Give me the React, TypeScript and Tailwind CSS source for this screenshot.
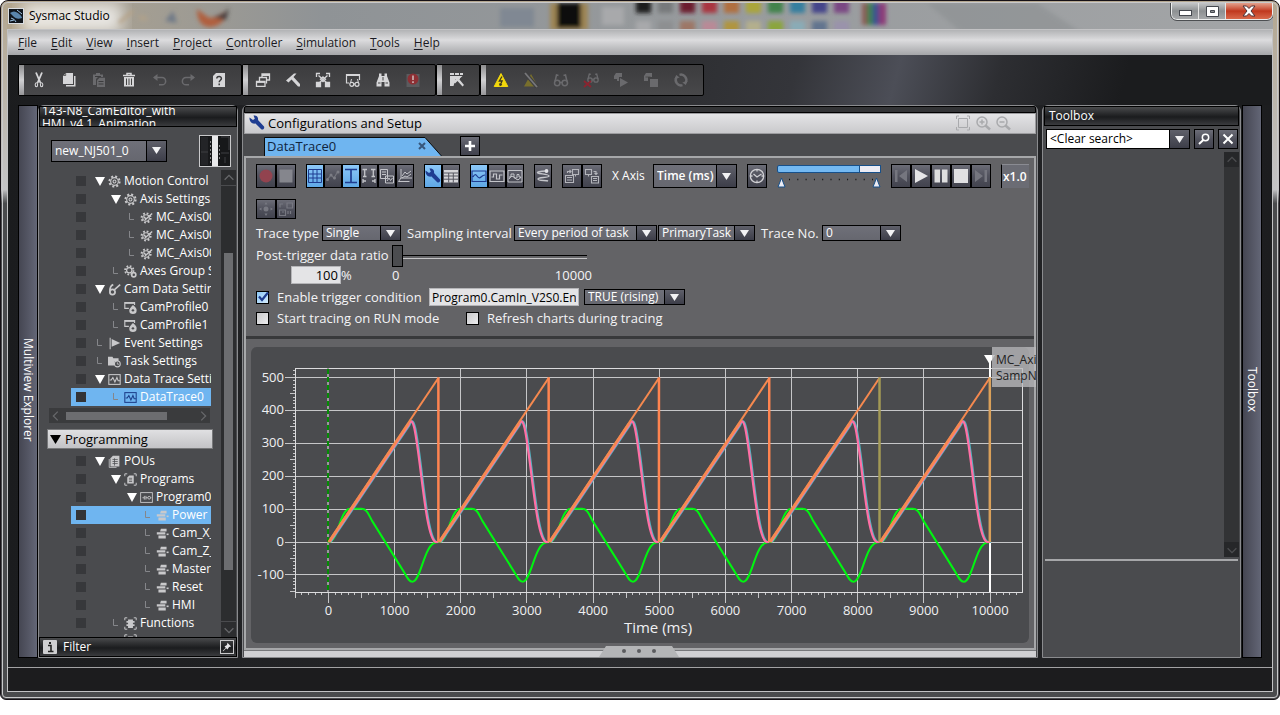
import React from "react";

type IconName = keyof typeof ICONS;

const ICONS = {
  cut: (
    <g fill="none" stroke="currentColor">
      <path d="M5 .5 L9.500 11 M11 .5 L6.500 11" strokeWidth="1.800" />
      <ellipse cx="5.400" cy="12.800" rx="1.200" ry="2" strokeWidth="1.100" />
      <ellipse cx="10.600" cy="12.800" rx="1.200" ry="2" strokeWidth="1.100" />
    </g>
  ),
  copy: (
    <g fill="currentColor">
      <path d="M5 1h7v11H2V4z" />
      <path d="M13 4h1.500v10.500H5V13h8z" />
      <path d="M2.500 3.500h2.200V1.300" fill="none" stroke="#444" strokeWidth=".8" />
    </g>
  ),
  paste: (
    <g fill="currentColor">
      <path d="M2 2.500h3V1h4v1.500h3V5H7L5 7v6H2z" />
      <path d="M8.500 5.800h5.500V15H6V8.300z" />
      <path d="M4 4.500h6M7.500 9.500h5M7.500 12h5" stroke="#3c3c3e" strokeWidth="1" />
    </g>
  ),
  trash: (
    <g fill="none" stroke="currentColor">
      <path d="M2 3.500h12M6 3V1.500h4V3" strokeWidth="1.500" />
      <path d="M3 5h10v9.500H3z" fill="currentColor" stroke="none" />
      <path d="M5.500 6.500v6.500M8 6.500v6.500M10.500 6.500v6.500" stroke="#444" strokeWidth="1" />
    </g>
  ),
  undo: (
    <g fill="none" stroke="currentColor" strokeWidth="1.500">
      <path d="M3 5.500h8a3.600 3.600 0 0 1 0 7.300H8" />
      <path d="M6.500 2L2 5.500l4.500 3.500z" fill="currentColor" stroke="none" />
    </g>
  ),
  redo: (
    <g fill="none" stroke="currentColor" strokeWidth="1.500">
      <path d="M13 5.500H5a3.600 3.600 0 0 0 0 7.300H8" />
      <path d="M9.500 2L14 5.500l-4.500 3.500z" fill="currentColor" stroke="none" />
    </g>
  ),
  help: (
    <g>
      <path d="M5 1h9v14H2V4z" fill="currentColor" />
      <path d="M5.800 6.500C5.800 3.600 10.500 3.800 10.400 6.600C10.400 8.300 8.200 8.300 8.200 10.300M8.200 11.500v1.700" fill="none" stroke="#3a3a3c" strokeWidth="1.500" />
    </g>
  ),
  windows: (
    <g fill="none" stroke="currentColor" strokeWidth="1.300">
      <path d="M7 6V1.800h7.500V8H11" />
      <path d="M7 3h7.500" strokeWidth="2" />
      <path d="M4.500 9V5.500H11.500v6" />
      <path d="M1.500 9.500h8.500v4.800H1.500z" />
      <path d="M1.500 10h8.500" strokeWidth="1.800" />
    </g>
  ),
  hammer: (
    <g fill="currentColor">
      <path d="M1 8.500L9 1.500h2.500L8.500 5l6.500 7v2.500h-2L6.500 7.500 3.500 10.500z" />
    </g>
  ),
  network: (
    <g fill="none" stroke="currentColor" strokeWidth="1.300">
      <path d="M3.500 3.500l9 8M12.500 3.500l-9 8" />
      <path d="M1.500 5V1.500H5M11 1.500h3.500V5" />
      <path d="M8 5l2.500 2.300L8 9.600 5.500 7.300z" />
      <path d="M1.500 10.500h4v4h-4zM10.500 10.500h4v4h-4z" fill="currentColor" />
    </g>
  ),
  watch: (
    <g fill="none" stroke="currentColor">
      <path d="M4 11H1.500V2.500h13V8" strokeWidth="1.200" />
      <path d="M1.500 3h13" strokeWidth="2" />
      <circle cx="6.800" cy="12.300" r="2" strokeWidth="1.200" />
      <circle cx="12" cy="12.300" r="2" strokeWidth="1.200" />
      <path d="M5.500 11l1-4M13.500 11l-1-4M8.800 12h1.200" />
    </g>
  ),
  binoculars: (
    <g fill="currentColor">
      <path d="M4 1.500h2.500V4H9.500V1.500H12V4l2.500 6.500v4H9.500V10h-3v4.500h-5v-4L4 4z" />
      <path d="M3 11h2.500M10.500 11H13M8 5v3.500" stroke="#444" strokeWidth="1" />
    </g>
  ),
  alert: (
    <g>
      <path d="M1.500 2h13v13h-13z" fill="#5b5b5e" />
      <circle cx="8" cy="7" r="5.500" fill="#8d2f34" />
      <path d="M8 3.500v4.500M8 9.200v1.700" stroke="#c4a8a8" strokeWidth="1.800" />
    </g>
  ),
  toolWindow: (
    <g fill="currentColor">
      <path d="M1 1h4v2H1zM6 1h4v2H6zM11 1h3v2h-3zM1 4h12.500l-5 4.500L6.500 7l-2 7H1z" />
      <path d="M4 10l5-5h2.500l-1 2.500L15 13l-1.500 1.500L8.500 9 6 11.500z" />
    </g>
  ),
  online: (
    <g>
      <path d="M8 1.500l6.800 13H1.200z" fill="#f2d70c" stroke="#f2d70c" strokeLinejoin="round" />
      <path d="M9 4.500L6.300 9h2.800L7.300 13M6.500 11.500l.7 1.800 1.800-.8" fill="none" stroke="#3b3620" strokeWidth="1.300" />
    </g>
  ),
  offline: (
    <g>
      <path d="M8 2l7 12.500H1z" fill="#786f2c" />
      <path d="M2 1l12 14" stroke="#3f3f41" strokeWidth="4" />
      <path d="M2 1l12 14" stroke="#77777a" strokeWidth="1.800" />
    </g>
  ),
  glasses: (
    <g fill="none" stroke="currentColor" strokeWidth="1.500">
      <circle cx="4.200" cy="11" r="2.700" />
      <circle cx="11.800" cy="11" r="2.700" />
      <path d="M2 9.500L3.500 3l2 .5M14 9.500L12.500 3l-2 .5M7 10.500h2" />
    </g>
  ),
  glassesOff: (
    <g fill="none" stroke="currentColor" strokeWidth="1.300">
      <circle cx="7" cy="8" r="2.200" />
      <circle cx="13" cy="8" r="2.200" />
      <path d="M5 7l1.300-5 1.500.4M15 7l-1.300-5-1.500.4M9.300 7.500h1.400" />
      <path d="M1 9l7 6M8 9l-7 6" stroke="#8b2430" strokeWidth="1.800" />
    </g>
  ),
  filePlay: (
    <g fill="currentColor">
      <path d="M3 1h6v4H6v4H4V7H1V4zM7 6l8 4.500L7 15z" />
    </g>
  ),
  fileStop: (
    <g fill="currentColor">
      <path d="M3 1h6v4H5v4H1V4zM7 7h8v8H7z" />
      <path d="M2.500 5h5" stroke="#444" strokeWidth=".8" />
    </g>
  ),
  sync: (
    <g fill="none" stroke="currentColor" strokeWidth="2.400">
      <path d="M9.500 13.200A5.400 5.400 0 0 1 3.400 5.300" />
      <path d="M6.500 2.800A5.400 5.400 0 0 1 12.600 10.700" />
      <path d="M1.500 7l1.700-4 3.500 2.500zM14.500 9l-1.700 4-3.500-2.500z" fill="currentColor" stroke="none" />
    </g>
  ),
  gear: (
    <g fill="none" stroke="currentColor">
      <circle cx="8" cy="8" r="6.300" strokeWidth="2.400" strokeDasharray="2.500 2.450" />
      <circle cx="8" cy="8" r="4.700" strokeWidth="1.400" />
      <circle cx="8" cy="8" r="1.800" strokeWidth="1.300" />
    </g>
  ),
  gearEdit: (
    <g fill="none" stroke="currentColor">
      <circle cx="7.500" cy="8.500" r="5.600" strokeWidth="2.400" strokeDasharray="2.200 2.200" />
      <circle cx="7.500" cy="8.500" r="4" strokeWidth="1.300" />
      <path d="M6 11L15 3M5 7l2.500 3.500" strokeWidth="1.800" />
    </g>
  ),
  gears: (
    <g fill="none" stroke="currentColor">
      <circle cx="6.500" cy="6.500" r="5.200" strokeWidth="2.200" strokeDasharray="2.100 1.980" />
      <circle cx="6.500" cy="6.500" r="3.300" strokeWidth="1.500" />
      <circle cx="12" cy="12" r="2.600" strokeWidth="2" />
    </g>
  ),
  cam: (
    <g fill="none" stroke="currentColor">
      <circle cx="5.500" cy="11" r="3.200" strokeWidth="2.200" />
      <path d="M2.500 10C2 5 4 3 6.500 2M7 9L15 2" strokeWidth="2" />
    </g>
  ),
  camProfile: (
    <g fill="none" stroke="currentColor">
      <path d="M6 9H1V2h12v3" strokeWidth="1.400" />
      <path d="M1 2.500h12" strokeWidth="2" />
      <path d="M11 5c4 3 4.800 5 4.500 7a4.500 4 0 0 1-9 0C6.200 10 8 8 11 5z" fill="currentColor" stroke="none" />
      <circle cx="11" cy="11.500" r="1.500" fill="#4a4b4e" stroke="none" />
    </g>
  ),
  flag: (
    <g fill="currentColor">
      <path d="M2 1h1.300v14H2zM4.500 2.500L15 7.500 4.500 12z" />
    </g>
  ),
  task: (
    <g fill="currentColor">
      <path d="M0 2h5.500l1 2H13v4H8v5H0z" />
      <circle cx="11.500" cy="11" r="3.600" fill="#4a4b4e" stroke="currentColor" strokeWidth="1.300" />
      <path d="M11.500 9v2.300h2" fill="none" stroke="currentColor" />
    </g>
  ),
  trace: (
    <g fill="none" stroke="currentColor" strokeWidth="1.300">
      <rect x="1" y="2" width="14" height="12" />
      <path d="M2 8.500h2L6 5.500l2.500 5.500 2.500-5.500 1.500 4H15" />
    </g>
  ),
  pous: (
    <g fill="currentColor">
      <path d="M6 1h8v13H3V4z" />
      <path d="M1.500 5v10.300h9" fill="none" stroke="currentColor" />
      <path d="M5.500 5.500h6.500M5.500 8h6.500M5.500 10.500h6.500M8 4v9" stroke="#4a4b4e" strokeWidth=".9" />
    </g>
  ),
  programs: (
    <g>
      <path d="M4 1H1v3M12 1h3v3M4 15H1v-3M12 15h3v-3" fill="none" stroke="currentColor" strokeWidth="1.200" />
      <path d="M6.500 3H12v10H4V5.500z" fill="currentColor" />
      <path d="M6 6.500h4M6 8.500h4M6 10.500h4" stroke="#4a4b4e" strokeWidth=".9" />
    </g>
  ),
  functions: (
    <g>
      <path d="M4 1H1v3M12 1h3v3M4 15H1v-3M12 15h3v-3" fill="none" stroke="currentColor" strokeWidth="1.200" />
      <path d="M5 3h6v2h2v2h-2v2h2v2h-2v2.500H5V11H3V9h2V7H3V5h2z" fill="currentColor" />
    </g>
  ),
  ladder: (
    <g fill="none" stroke="currentColor" strokeWidth="1.100">
      <rect x=".8" y="2" width="14.400" height="12" />
      <path d="M3 8.300h2.200M5.300 6v4.600M7.300 6v4.600M7.300 8.300h2.200M13 8.300h1" />
      <circle cx="11.300" cy="8.300" r="1.700" />
    </g>
  ),
  section: (
    <g fill="currentColor">
      <path d="M6 2h7v3.500H5zM1 6.500h10.500v2.700H1zM3 10.500h9v3.500H3z" />
      <path d="M13 8h2.500v2H13z" />
    </g>
  ),
};

function Icon({ name, className = "size-4" }: { name: IconName; className?: string }) {
  return (
    <svg viewBox="0 0 16 16" className={className} aria-hidden="true">
      {ICONS[name]}
    </svg>
  );
}

const BTN = "border border-black bg-linear-to-b from-[#6c6d77] via-[#50515c] to-[#42434e] flex items-center justify-center shrink-0";
const BTN_ON = "border border-black bg-linear-to-b from-[#8cc8f8] to-[#5fa8e6] flex items-center justify-center shrink-0";

function Arrow() {
  return (
    <svg viewBox="0 0 9 7" className="w-[9px] h-[7px]" aria-hidden="true">
      <path d="M0 0h9L4.500 7z" fill="#f2f2f4" />
    </svg>
  );
}

function Combo({ label, value, className, dark = true }: { label: string; value: string; className: string; dark?: boolean }) {
  return (
    <div className={`grid shrink-0 border border-black ${dark ? "bg-linear-to-b from-[#6f7079] to-[#66676f] text-white" : "bg-white text-black"} ${className}`}>
      <select aria-label={label} defaultValue={value} className="[grid-area:1/1] appearance-none bg-transparent w-full h-full pl-[3px] outline-none leading-[14px] min-w-0">
        <option className="text-black">{value}</option>
      </select>
      <span className="[grid-area:1/1] justify-self-end w-5 h-full border-l border-black bg-linear-to-b from-[#5f606a] to-[#3d3e49] flex items-center justify-center pointer-events-none">
        <Arrow />
      </span>
    </div>
  );
}

/* ---------- Title bar ---------- */

const PALETTE: [number, string, string][] = [
  [636, "#1b1b1b", "#a8a9ab"],
  [658, "#77797b", "#8d8f91"],
  [680, "#6c1f2d", "#9d7766"],
  [702, "#a9363f", "#b98a97"],
  [724, "#b0703f", "#b0953f"],
  [746, "#aaa53a", "#b3af8d"],
  [768, "#42834c", "#8ba53e"],
  [790, "#347f9f", "#8aabb6"],
  [812, "#45458a", "#62758f"],
  [834, "#7a4683", "#9a93ab"],
];

function TitleBar() {
  return (
    <header className="relative flex h-[26px] shrink-0 overflow-hidden bg-linear-to-r from-[#b3a68f] via-[#8f9396] via-25% to-[#a3a5a7]">
      <svg className="absolute inset-0 h-full w-full" aria-hidden="true">
        <defs>
          <filter id="haze"><feGaussianBlur stdDeviation="2" /></filter>
          <filter id="glow"><feGaussianBlur stdDeviation="8" /></filter>
        </defs>
        <rect x="15" y="0" width="100" height="30" fill="#fff" opacity=".75" filter="url(#glow)" />
        <g filter="url(#haze)">
          <path d="M112 20l14-12M132 14l8 2" stroke="#b5a287" strokeWidth="3" />
          <path d="M158 18l8-10 4 12z" fill="#6f7987" />
          <path d="M190 6q0 18 14 18q14-2 16-16l-8 4q-8 6-14 0z" fill="#b05f3c" />
          <path d="M206 14q10-1 16-9l-3 12z" fill="#3f3a3a" />
          <rect x="493" y="5" width="34" height="19" fill="#808893" />
          <rect x="543" y="0" width="38" height="27" fill="#9e8555" />
          <rect x="550" y="0" width="24" height="25" fill="#0e0e0e" />
          <rect x="595" y="4" width="22" height="18" fill="#a8a9ab" />
          {PALETTE.map(([x, a, b]) => (
            <g key={x}>
              <rect x={x - 7} y="-4" width="15" height="14" fill={a} />
              <rect x={x - 7} y="18" width="15" height="12" fill={b} />
            </g>
          ))}
          <rect x="855" y="0" width="6" height="22" fill="#8a5a54" />
          <rect x="860" y="0" width="6" height="22" fill="#3f7f52" />
          <rect x="866" y="0" width="6" height="22" fill="#3c4f92" />
          <rect x="872" y="0" width="7" height="22" fill="#8c3a78" />
        </g>
        <path d="M920 0h110l45 30h-120z" fill="#84888a" opacity=".4" filter="url(#haze)" />
      </svg>
      <div className="relative flex flex-1 items-center gap-[5px] pl-[1px]">
        <svg viewBox="0 0 16 16" className="size-4" aria-hidden="true">
          <rect width="16" height="16" fill="#d9dde2" />
          <rect x="1" y="1" width="14" height="14" fill="#10151c" />
          <path d="M2 5q4-3 8 0t4 5q-5 2-8-1T2 5z" fill="#5b86ad" />
          <path d="M3 10q4 1 5 4M9 2l5 4M2 13l4-1" stroke="#9ec4e6" />
        </svg>
        <h1 className="text-[12px] leading-4 text-black">Sysmac Studio</h1>
      </div>
      <div className="relative flex h-[17px] overflow-hidden rounded-b-md border border-t-0 border-[#eceded] outline outline-[#4d4f52]">
        <button aria-label="Minimize" className="flex w-[27px] items-end justify-center border-r border-[#e4e4e4] bg-linear-to-b from-[#c4c6c8] via-[#8d9092] to-[#a6a8aa] pb-[3px]">
          <svg viewBox="0 0 13 6" className="h-[6px] w-[13px]"><rect x=".5" y=".5" width="12" height="5" fill="#fff" stroke="#45484f" /></svg>
        </button>
        <button aria-label="Maximize" className="flex w-[27px] items-center justify-center border-r border-[#e4e4e4] bg-linear-to-b from-[#c4c6c8] via-[#8d9092] to-[#a6a8aa]">
          <svg viewBox="0 0 13 11" className="h-[11px] w-[13px]"><path d="M.5.500h12v10H.5zM4.500 4.500v2h4v-2z" fill="#fff" stroke="#45484f" fillRule="evenodd" /></svg>
        </button>
        <button aria-label="Close" className="flex w-[46px] items-center justify-center bg-linear-to-b from-[#e2a08c] via-[#c0371d] to-[#d8684a]">
          <svg viewBox="0 0 14 12" className="h-3 w-[14px]"><path d="M1 1h3.500L7 3.500 9.500 1H13L9 6l4 5H9.500L7 8.500 4.500 11H1l4-5z" fill="#fff" stroke="#4b3238" /></svg>
        </button>
      </div>
    </header>
  );
}

/* ---------- Menu and main toolbar ---------- */

const MENU: string[] = ["File", "Edit", "View", "Insert", "Project", "Controller", "Simulation", "Tools", "Help"];

function MenuBar() {
  return (
    <nav className="flex h-[25px] shrink-0 items-center gap-[14px] bg-linear-to-b from-[#b2b3b5] via-[#dcdcde] via-40% to-[#a5a6a9] pl-[10px] text-[12px] leading-4 text-[#1a1a22]">
      {MENU.map((m) => (
        <button key={m} className="whitespace-nowrap">
          <span className="underline underline-offset-2">{m[0]}</span>
          {m.slice(1)}
        </button>
      ))}
    </nav>
  );
}

type Tool = [IconName, string, boolean];

const TOOLBARS: Tool[][] = [
  [["cut", "Cut", true], ["copy", "Copy", true], ["paste", "Paste", false], ["trash", "Delete", true], ["undo", "Undo", false], ["redo", "Redo", false], ["help", "Help", true]],
  [["windows", "Windows", true], ["hammer", "Build", true], ["network", "Check", true], ["watch", "Watch", true], ["binoculars", "Search", true], ["alert", "Abort", false]],
  [["toolWindow", "Troubleshooting", true]],
  [["online", "Online", true], ["offline", "Offline", false], ["glasses", "Monitor", false], ["glassesOff", "Stop monitor", false], ["filePlay", "Run mode", false], ["fileStop", "Program mode", false], ["sync", "Synchronize", false]],
];

function MainToolbar() {
  return (
    <div className="flex h-[50px] shrink-0 items-center bg-[linear-gradient(105deg,#1b1c1e_0%,#1f2022_10%,#35363a_35%,#2c2d30_50%,#34353a_62%,#4c4e57_70%,#2d2e32_78%,#1b1c1e_88%)] pl-[10px]">
      {TOOLBARS.map((tools, i) => (
        <div key={i} className="flex h-8 rounded-xs border border-black bg-linear-to-b from-[#3c3c3e] to-[#48484a] pr-[7px]">
          <span className="w-[5px] bg-linear-to-b from-[#8d8d8f] via-[#d0d0d2] to-[#97979a]" />
          {tools.map(([icon, label, on]) => (
            <button key={label} aria-label={label} className={`flex w-[30px] items-center justify-center ${on ? "text-[#d6d6d8]" : "text-[#6a6a6d]"}`}>
              <Icon name={icon} />
            </button>
          ))}
        </div>
      ))}
    </div>
  );
}

/* ---------- Left explorer ---------- */

type Node = { text: string; icon: IconName; level: number; open?: boolean; selected?: boolean };

const CONFIG: Node[] = [
  { text: "Motion Control", icon: "gear", level: 0, open: true },
  { text: "Axis Settings", icon: "gear", level: 1, open: true },
  { text: "MC_Axis00", icon: "gearEdit", level: 2 },
  { text: "MC_Axis00", icon: "gearEdit", level: 2 },
  { text: "MC_Axis00", icon: "gearEdit", level: 2 },
  { text: "Axes Group S", icon: "gears", level: 1 },
  { text: "Cam Data Settin", icon: "cam", level: 0, open: true },
  { text: "CamProfile0", icon: "camProfile", level: 1 },
  { text: "CamProfile1", icon: "camProfile", level: 1 },
  { text: "Event Settings", icon: "flag", level: 0 },
  { text: "Task Settings", icon: "task", level: 0 },
  { text: "Data Trace Settin", icon: "trace", level: 0, open: true },
  { text: "DataTrace0", icon: "trace", level: 1, selected: true },
];

const PROGRAMMING: Node[] = [
  { text: "POUs", icon: "pous", level: 0, open: true },
  { text: "Programs", icon: "programs", level: 1, open: true },
  { text: "Program0", icon: "ladder", level: 2, open: true },
  { text: "Power", icon: "section", level: 3, selected: true },
  { text: "Cam_X_", icon: "section", level: 3 },
  { text: "Cam_Z_", icon: "section", level: 3 },
  { text: "Master", icon: "section", level: 3 },
  { text: "Reset", icon: "section", level: 3 },
  { text: "HMI", icon: "section", level: 3 },
  { text: "Functions", icon: "functions", level: 1 },
];

const INDENT = ["pl-2", "pl-6", "pl-10", "pl-14"];

function Tree({ nodes }: { nodes: Node[] }) {
  return (
    <ul className="ml-8 w-[140px]">
      {nodes.map((n, i) => (
        <li key={i} className={`flex h-[18px] items-center overflow-hidden whitespace-nowrap pl-[5px] ${n.selected ? "bg-[#6fb5f0]" : ""}`}>
          <span className={`size-[10px] shrink-0 ${n.selected ? "bg-[#333437]" : "bg-[#37383b]"}`} />
          <span className={`flex items-center ${INDENT[n.level]}`}>
            <svg viewBox="0 0 11 10" className="h-[10px] w-[11px] shrink-0" aria-hidden="true">
              {n.open ? <path d="M1 1h10L6 10z" fill="#fff" /> : <path d="M3.500 1v6.500H8" fill="none" stroke="#85868a" />}
            </svg>
            <Icon name={n.icon} className={`ml-[3px] size-[13px] shrink-0 ${n.selected && n.icon === "trace" ? "text-[#1d3f8a]" : "text-[#c9c9cb]"}`} />
            <span className="pl-[3px] text-[12px] leading-[18px] text-white">{n.text}</span>
          </span>
        </li>
      ))}
    </ul>
  );
}

const PANEL = "flex min-h-0 flex-col rounded-t-md border border-[#8a8b8e] bg-[#4a4b4e]";
const HEAD = "border border-black bg-linear-to-b from-[#4a4b4d] via-[#1b1c1e] via-55% to-[#3a3b3e] text-white";

function SideStrip({ title, className }: { title: string; className: string }) {
  return (
    <button className={`flex shrink-0 items-center justify-center border border-black bg-linear-to-r from-[#454652] to-[#636676] pt-4 text-[12px] text-white ${className}`}>
      <span className="[writing-mode:vertical-rl] leading-4">{title}</span>
    </button>
  );
}

function Chevron({ d }: { d: string }) {
  return (
    <svg viewBox="0 0 16 16" className="size-[14px]" aria-hidden="true">
      <path d={d} fill="none" stroke="#66676a" strokeWidth="1.500" />
    </svg>
  );
}

const UP = "M3 10l5-5 5 5";
const DOWN = "M3 6l5 5 5-5";

function Explorer() {
  return (
    <aside className={`${PANEL} w-[200px] shrink-0`}>
      <div className={`${HEAD} flex h-[21px] shrink-0 items-center overflow-hidden px-[2px] text-[12px] leading-[13px]`}>
        <h2>143-N8_CamEditor_with<br />HMI_v4.1_Animation</h2>
      </div>
      <div className="flex h-[43px] shrink-0 items-center justify-between pl-3 pr-[6px] pt-[4px]">
        <Combo label="Controller" value="new_NJ501_0" className="h-[22px] w-[116px] text-[12px]" />
        <svg viewBox="0 0 32 32" className="size-8" aria-label="Controller unit">
          <rect x=".5" y=".5" width="31" height="31" fill="#17181a" stroke="#c9c9cb" />
          <rect x="2" y="2" width="7" height="28" fill="#232427" />
          <path d="M2 17h7M22 2h8v13M22 18h8M26 22v6" stroke="#3e3f42" fill="none" />
          <rect x="13" y="1" width="6" height="30" fill="#e9e9eb" />
          <path d="M11.500 6v22M20.500 10v14" stroke="#8a8a8c" strokeDasharray="2 2" />
        </svg>
      </div>
      <div className="flex min-h-0 flex-1">
        <div className="min-w-0 flex-1 overflow-hidden pt-[2px]">
          <Tree nodes={CONFIG} />
          <div className="ml-[10px] mt-[2px] flex h-[15px] w-[161px] items-center bg-[#3a3b3d]">
            <Chevron d="M10 3L5 8l5 5" />
            <span className="ml-[3px] h-2 w-[101px] bg-[#6c6d70]" />
            <span className="flex-1" />
            <Chevron d="M6 3l5 5-5 5" />
          </div>
          <h3 className="mb-[3px] ml-2 mt-[6px] flex h-5 w-[166px] items-center gap-1 border border-[#77787a] bg-linear-to-b from-[#e0e0e2] to-[#c3c3c6] pl-[2px] text-[13px] leading-4 text-black">
            <svg viewBox="0 0 11 9" className="h-[9px] w-[11px]" aria-hidden="true"><path d="M0 0h11L5.500 9z" /></svg>
            Programming
          </h3>
          <Tree nodes={PROGRAMMING} />
          <Icon name="functions" className="ml-[85px] mt-[2px] size-[13px] text-[#c9c9cb]" />
        </div>
        <div className="mr-[1px] flex w-[15px] flex-col items-center bg-[#2c2d2f]">
          <span className="flex h-4 w-full items-center justify-center border-b border-[#4a4b4e]"><Chevron d={UP} /></span>
          <span className="mt-[67px] h-[317px] w-[9px] bg-[#6c6d70]" />
          <span className="flex-1" />
          <span className="flex h-4 w-full items-center justify-center border-t border-[#4a4b4e]"><Chevron d={DOWN} /></span>
        </div>
      </div>
      <div className={`${HEAD} flex h-5 shrink-0 items-center pl-[3px] pr-[2px] text-[12px] leading-4`}>
        <svg viewBox="0 0 14 14" className="size-[14px]" aria-hidden="true">
          <rect width="14" height="14" rx="1" fill="#cfcfd1" />
          <path d="M5 5.500h3V11M5 11.500h5.500" stroke="#222" strokeWidth="1.600" fill="none" />
          <rect x="6" y="2" width="2" height="2" fill="#222" />
        </svg>
        <span className="flex-1 pl-[6px]">Filter</span>
        <button aria-label="Pin" className="flex size-[14px] items-center justify-center border border-[#c9c9cb]">
          <svg viewBox="0 0 12 12" className="size-[10px]"><path d="M6.500 1L11 5.500 8.500 6 6.500 9 5 7.500 1.500 11 1 10.500 4.500 7 3 5.500 6 3.500z" fill="#e6e6e8" /></svg>
        </button>
      </div>
    </aside>
  );
}

/* ---------- Trace chart ---------- */

const px = (ms: number) => 77.4 + ms * 0.06617;
const py = (v: number) => 195 - v * 0.329;
const range = (a: number, b: number, s: number) => Array.from({ length: Math.round((b - a) / s) + 1 }, (_, i) => a + i * s);

type Seg = [string, ...number[]];

function trace(start: number, segs: Seg[]) {
  return segs
    .map(([cmd, ...n]) => cmd + n.map((v, i) => (i % 2 ? py(v) : px(start + v)).toFixed(1)).join(" "))
    .join("");
}

const GREEN: Seg[] = [["M", 0, 0], ["C", 150, 0, 170, 100, 330, 101], ["L", 500, 101], ["C", 585, 101, 610, 82, 660, 64], ["L", 1150, -94], ["C", 1200, -112, 1225, -121, 1270, -121], ["C", 1400, -121, 1450, 0, 1640, -1], ["L", 1667, 0]];
const PINK: Seg[] = [["M", 20, 0], ["L", 1210, 355], ["C", 1245, 372, 1270, 372, 1300, 345], ["C", 1400, 250, 1470, 10, 1620, 0], ["L", 1667, 0]];
const ORANGE: Seg[] = [["M", 0, 0], ["L", 1667, 500]];

function Chart() {
  const cycles = range(0, 5, 1).map((n) => n * 1666.7);
  return (
    <svg viewBox="0 0 778 296" className="block w-full" role="img" aria-label="Data trace chart">
      <g stroke="#c6c6c8" strokeWidth="1" shapeRendering="crispEdges">
        {range(1000, 10000, 1000).map((x) => <path key={x} d={`M${px(x)} 21V256`} />)}
        <path d={`M${px(0)} 245V256`} />
        {range(-100, 500, 100).map((y) => <path key={y} d={`M34 ${py(y)}H771.5`} />)}
        {range(-500, 10400, 100).map((x) => <path key={x} d={`M${px(x)} 245v${x % 500 === 0 ? 6 : 3}`} />)}
        {range(-150, 520, 10).map((y) => <path key={y} d={`M44.500 ${py(y)}h${y % 50 === 0 ? -6 : -3}`} />)}
        <path d="M44.500 21H771.500V245.500H44.500z" fill="none" stroke="#dcdcde" />
      </g>
      <g strokeWidth="2" shapeRendering="crispEdges">
        <path d="M77 21V245" stroke="#9a9a9c" />
        <path d="M77 22V245" stroke="#048c04" strokeDasharray="5 3" />
      </g>
      <path d="M739 14V245" stroke="#fff" strokeWidth="2" />
      <g fill="none" strokeWidth="2" strokeLinejoin="round">
        {cycles.map((c, i) => (
          <g key={c}>
            <path d={trace(c, GREEN)} stroke="#00f510" />
            <path d={trace(c + 15, PINK)} stroke="#4fb3c0" />
            <path d={trace(c, PINK)} stroke="#ff6fa5" strokeWidth="2.200" />
            <path d={trace(c, [["M", 8, 0], ["L", 1210, 360]])} stroke="#f98a5a" strokeWidth="2.500" />
            <path d={trace(c, ORANGE)} stroke="#f5894f" />
            <path d={`M${px(c + 1662)} ${py(500)}V195`} stroke={i === 4 ? "#a39a55" : i === 5 ? "#d9a05a" : "#ff8450"} strokeWidth="2.500" />
          </g>
        ))}
      </g>
      <path d="M733 8h11l-5.500 9z" fill="#fff" />
      <g fill="#f0f0f2" fontSize="13">
        {range(-100, 500, 100).map((y) => <text key={y} x="33" y={py(y) + 4} textAnchor="end">{y}</text>)}
        {range(0, 10000, 1000).map((x) => <text key={x} x={px(x)} y="268" textAnchor="middle">{x}</text>)}
        <text x="407" y="286" textAnchor="middle" fontSize="15">Time (ms)</text>
      </g>
    </svg>
  );
}

/* ---------- Trace toolbar ---------- */

const TI: Record<string, React.ReactNode> = {
  record: <circle cx="8" cy="8" r="6.500" fill="#92434f" />,
  stopOff: <path d="M1.500 1.500h13v13h-13z" fill="#85868d" />,
  grid: <path d="M1.500 1.500h13v13h-13zM6 1.500v13M10 1.500v13M1.500 6h13M1.500 10h13" stroke="#1f3d91" fill="none" />,
  points: <g fill="#7c7d85"><path d="M2 12l4-5 3 3 4-7" stroke="#73747c" fill="none" strokeWidth="1.200" /><circle cx="2.500" cy="11.500" r="1.500" /><circle cx="6" cy="7" r="1.500" /><circle cx="9.500" cy="10" r="1.500" /><circle cx="13" cy="4" r="1.500" /></g>,
  cursorY: <path d="M2 1.500h12M2 14.500h12M8 1.500v13" stroke="#1f3d91" fill="none" strokeWidth="1.700" />,
  cursorX: <path d="M1.500 1.500h4.500M10 1.500h4.500M3.700 1.500v7M12.300 1.500v7M2 8.500h3.500M10.500 8.500H14M2 11v4M14 11v4M2 13h3M14 13h-3" stroke="#c4c5ca" fill="none" strokeWidth="1.300" />,
  overlay: <path d="M1.500 1.500h7v9h-7zM3 4h4M3 6.500h4M6.500 8h8v7h-8zM8 13l2-3 1.500 2.500L13.500 10" stroke="#c4c5ca" fill="none" />,
  stack: <path d="M4 1v9h11M1.500 13.500h11M5 8l3-4 2 2 4-3M5 10l3-2 2 1 4-3M1.500 13.500L4 10" stroke="#c4c5ca" fill="none" />,
  wrench: <path d="M.5 2.500L4 5l1.800-1.300L4.500.500C8 0 9.500 2.500 9 5l6 6.500c1 2-1.500 4-3 2.500L6.500 8.500C3 9.300.3 6.500.5 2.500z" fill="#1f3d91" />,
  table: <g><path d="M1 2h14v12.500H1z" fill="#d5d5d9" /><path d="M1 5h14M1 8h14M1 11.200h14M5.700 5v9.500M10.300 5v9.500" stroke="#555660" /></g>,
  wave: <path d="M1 3h14v10.500H1zM2 9q2-4 4-1t4 1 4-2" stroke="#1f3d91" fill="none" strokeWidth="1.200" />,
  pulse: <path d="M1 3h14v10.500H1zM2.500 9h2V6h3v5h3V7h3" stroke="#c4c5ca" fill="none" strokeWidth="1.200" />,
  both: <path d="M1 2.500h14v11.500H1zM2 9h2V6h3v4h3V6.500h2V9h2M2 11q3-5 6-1t6-1" stroke="#c4c5ca" fill="none" />,
  spring: <g><path d="M11 3C5 3 1 4 3 5s11 1 11 3-11 1-11 3 8 1 10 2" stroke="#c4c5ca" fill="none" strokeWidth="1.400" /><circle cx="11.500" cy="3" r="1.900" fill="#e2e2e6" /></g>,
  export: <path d="M8.500 1.500h6v5h-6zM11.500 7v1.500M1.500 7.500h8v7h-8zM3 9.500h5M3 12h5M3.500 5V3.500h3.500M5.500 2l1.500 1.500L5.500 5" stroke="#b4b5bb" fill="none" strokeWidth="1.100" />,
  import: <path d="M1.500 1.500h6v5h-6zM4.500 7v1.500M7.500 8.500h7v6.500h-7zM9 10.500h4M9 12.500h4M9.500 3.500H12V6M10.500 5L12 6.500 13.500 5" stroke="#b4b5bb" fill="none" strokeWidth="1.100" />,
  clock: <g fill="none" stroke="#d0d0d4" strokeWidth="1.300"><circle cx="8" cy="8" r="6.700" /><path d="M4.500 6L8 9l4.500-3M8 2v1.500M8 12.500V14M2 8h1.500M12.500 8H14" /></g>,
  first: <path d="M2 2h2.500v12H2zM14 2v12L6 8z" fill="#75767f" />,
  play: <path d="M2 1l13 7-13 7z" fill="#e6e6e8" />,
  pause: <path d="M1.500 1.500h5.500v13H1.500zM9 1.500h5.500v13H9z" fill="#dededf" />,
  stop: <path d="M1 1h14v14H1z" fill="#e0e0e2" />,
  last: <path d="M11.500 2H14v12h-2.500zM2 2v12l8-6z" fill="#75767f" />,
  move: <g fill="#777881"><circle cx="8" cy="8" r="2.500" /><path d="M8 1l1.500 2.500h-3zM8 15l1.500-2.500h-3zM1 8l2.500-1.500v3zM15 8l-2.500-1.500v3z" /></g>,
  layout: <path d="M1.500 9h6v5.500h-6zM9 2h5.500v5H9zM2 6.500V3h3M4 11h2M10 10v3M12.500 10v3" stroke="#777881" fill="none" strokeWidth="1.200" />,
};

function TraceButton({ icon, label, w = "w-[18px]", on = false, h = "h-6" }: { icon: string; label: string; w?: string; on?: boolean; h?: string }) {
  return (
    <button aria-label={label} className={`${on ? BTN_ON : BTN} ${w} ${h}`}>
      <svg viewBox="0 0 16 16" className="size-4 shrink-0">{TI[icon]}</svg>
    </button>
  );
}

function TraceToolbar() {
  return (
    <div className="flex h-6 items-center gap-[10px]">
      <div className="flex">
        <TraceButton icon="record" label="Start trace" w="w-5" />
        <TraceButton icon="stopOff" label="Stop trace" w="w-5" />
      </div>
      <div className="flex">
        <TraceButton icon="grid" label="Grid" on />
        <TraceButton icon="points" label="Points" />
        <TraceButton icon="cursorY" label="Y cursor" on />
        <TraceButton icon="cursorX" label="X cursors" />
        <TraceButton icon="overlay" label="Overlay" />
        <TraceButton icon="stack" label="3D view" />
      </div>
      <div className="flex">
        <TraceButton icon="wrench" label="Settings" on />
        <TraceButton icon="table" label="Table" />
      </div>
      <div className="flex">
        <TraceButton icon="wave" label="Analog chart" on />
        <TraceButton icon="pulse" label="Digital chart" />
        <TraceButton icon="both" label="Both charts" />
      </div>
      <TraceButton icon="spring" label="3D motion" />
      <div className="flex">
        <TraceButton icon="export" label="Export" w="w-5" />
        <TraceButton icon="import" label="Import" w="w-5" />
      </div>
      <div className="flex shrink-0 items-center gap-[5px] whitespace-nowrap text-[12px]">
        <span className="w-9">X Axis</span>
        <Combo label="X Axis" value="Time (ms)" className="h-6 w-[84px] text-[12px] font-semibold" />
      </div>
      <TraceButton icon="clock" label="Time range" w="w-5" />
      <div className="flex w-[104px] shrink-0 flex-col gap-[3px]">
        <input
          type="range"
          aria-label="Playback position"
          min={0}
          max={100}
          defaultValue={100}
          className="block h-2 w-full appearance-none rounded-[2px] border border-[#17508a] bg-[#74b9f2] [&::-webkit-slider-thumb]:h-[6px] [&::-webkit-slider-thumb]:w-5 [&::-webkit-slider-thumb]:appearance-none [&::-webkit-slider-thumb]:bg-[#ececf4] [&::-webkit-slider-thumb]:outline [&::-webkit-slider-thumb]:outline-[#17508a]"
        />
        <svg viewBox="0 0 104 12" className="h-3 w-full" aria-hidden="true">
          <path d="M12 3.500H96" stroke="#111" strokeWidth="1.500" strokeDasharray="1 7.300" />
          <path d="M4.500 2l3.500 9H1zM99.500 2l3.500 9h-7z" fill="#ececf4" stroke="#17508a" />
        </svg>
      </div>
      <div className="flex">
        <TraceButton icon="first" label="First" w="w-5" />
        <TraceButton icon="play" label="Play" w="w-5" />
        <TraceButton icon="pause" label="Pause" w="w-5" />
        <TraceButton icon="stop" label="Stop" w="w-5" />
        <TraceButton icon="last" label="Last" w="w-5" />
      </div>
      <button className="h-6 w-7 shrink-0 border-l border-t border-l-black border-t-[#8a8b92] bg-[#6b6c74] pl-px text-left text-[12px] font-semibold">x1.0</button>
    </div>
  );
}

function Check({ id, label, checked = false }: { id: string; label: string; checked?: boolean }) {
  return (
    <div className="flex items-center gap-2">
      <span className="grid">
        <input id={id} type="checkbox" defaultChecked={checked} className="[grid-area:1/1] size-[13px] appearance-none border border-black bg-linear-to-br from-[#c9c9cb] to-[#ececee] checked:from-[#8cc8f8] checked:to-[#d4ebfc]" />
        {checked && (
          <svg viewBox="0 0 13 13" className="pointer-events-none size-[13px] [grid-area:1/1]"><path d="M3 5.500l3 3.500L12 1.500" fill="none" stroke="#1f3d91" strokeWidth="2.200" /></svg>
        )}
      </span>
      <label htmlFor={id} className="whitespace-nowrap">{label}</label>
    </div>
  );
}

function TraceSettings() {
  return (
    <div className="flex flex-col text-[13px] leading-4 text-[#f4f4f6]">
      <div className="flex h-4 items-center whitespace-nowrap">
        <span className="w-[66px]">Trace type</span>
        <Combo label="Trace type" value="Single" className="h-4 w-[79px] text-[12px]" />
        <span className="w-[113px] pl-[6px]">Sampling interval</span>
        <Combo label="Sampling interval" value="Every period of task" className="h-4 w-[143px] text-[12px]" />
        <Combo label="Task" value="PrimaryTask" className="ml-[1px] h-4 w-[97px] text-[12px]" />
        <span className="w-[67px] pl-[6px]">Trace No.</span>
        <Combo label="Trace No." value="0" className="h-4 w-[79px] text-[12px]" />
      </div>
      <div className="mt-[5px] flex">
        <div className="w-[136px]">
          <label htmlFor="ratio" className="block h-5 whitespace-nowrap leading-[18px]">Post-trigger data ratio</label>
          <div className="flex h-[18px] items-center pl-[35px]">
            <input aria-label="Ratio percent" defaultValue="100" className="h-[18px] w-[50px] border border-[#b5b5b8] bg-[#e4e4e6] pr-[2px] text-right text-black" />
            %
          </div>
        </div>
        <div className="w-[200px]">
          <input
            id="ratio"
            type="range"
            min={0}
            max={10000}
            defaultValue={0}
            className="block h-5 w-[195px] appearance-none bg-[linear-gradient(#000,#000),linear-gradient(#c4c4c6,#c4c4c6)] bg-[size:100%_1px,100%_1px] bg-[position:0_9px,0_12px] bg-no-repeat [&::-webkit-slider-thumb]:h-[22px] [&::-webkit-slider-thumb]:w-[11px] [&::-webkit-slider-thumb]:appearance-none [&::-webkit-slider-thumb]:border [&::-webkit-slider-thumb]:border-black [&::-webkit-slider-thumb]:bg-[#4b4c4f]"
          />
          <div className="flex h-[18px] items-center justify-between">
            <span>0</span>
            <span>10000</span>
          </div>
        </div>
      </div>
      <div className="mt-1 flex h-[18px] items-center">
        <div className="w-[173px]"><Check id="enable" label="Enable trigger condition" checked /></div>
        <input aria-label="Trigger variable" defaultValue="Program0.CamIn_V2S0.En" className="h-[18px] w-[150px] border border-[#b5b5b8] bg-[#e4e4e6] px-[2px] text-[12px] text-black" />
        <Combo label="Trigger edge" value="TRUE (rising)" className="ml-[5px] h-4 w-[101px] text-[12px]" />
      </div>
      <div className="mt-[3px] flex h-[18px] items-center">
        <div className="w-[210px]"><Check id="run" label="Start tracing on RUN mode" /></div>
        <Check id="refresh" label="Refresh charts during tracing" />
      </div>
    </div>
  );
}

function ZoomTools() {
  return (
    <div className="flex gap-1 pr-6 text-[#a9aaad]">
      <button aria-label="Fit"><svg viewBox="0 0 16 16" className="size-4"><path d="M4 1H1.500v3M12 1h2.500v3M4 15H1.500v-3M12 15h2.500v-3M3.500 3.500h9v9h-9z" fill="none" stroke="currentColor" /></svg></button>
      <button aria-label="Zoom in"><svg viewBox="0 0 16 16" className="size-4" fill="none" stroke="currentColor"><circle cx="7" cy="7" r="5" strokeWidth="1.500" /><path d="M4.500 7h5M7 4.500v5" strokeWidth="1.500" /><path d="M10.500 10.500L15 14.500" strokeWidth="2.500" /></svg></button>
      <button aria-label="Zoom out"><svg viewBox="0 0 16 16" className="size-4" fill="none" stroke="currentColor"><circle cx="7" cy="7" r="5" strokeWidth="1.500" /><path d="M4.500 7h5" strokeWidth="1.500" /><path d="M10.500 10.500L15 14.500" strokeWidth="2.500" /></svg></button>
    </div>
  );
}

function Editor() {
  return (
    <main className={`${PANEL} min-w-0 flex-1 px-[1px]`}>
      <div className="h-[7px] shrink-0 rounded-t-xs border border-black bg-[#333436]" />
      <div className="flex h-[21px] shrink-0 items-center border border-[#9c9c9f] bg-linear-to-b from-[#e4e4e6] to-[#c9c9cc] pb-px pl-1 text-[13px] leading-4 text-black">
        <svg viewBox="0 0 16 16" className="mr-[3px] size-4" aria-hidden="true">{TI.wrench}</svg>
        <h2 className="flex-1">Configurations and Setup</h2>
        <ZoomTools />
      </div>
      <div className="flex h-[22px] shrink-0 items-end pl-5">
        <div className="grid h-[19px] w-[178px]">
          <svg viewBox="0 0 178 19" className="h-[19px] w-[178px] [grid-area:1/1]" aria-hidden="true"><path d="M.5 19V.5H161L177.500 19" fill="#6fb5f0" stroke="#0a0a0a" /></svg>
          <div className="flex items-center justify-between pb-px pl-[3px] pr-[16px] text-[13px] leading-4 text-[#10243c] [grid-area:1/1]">
            DataTrace0
            <button aria-label="Close tab"><svg viewBox="0 0 8 8" className="size-2"><path d="M1 1l6 6M7 1L1 7" stroke="#37577c" strokeWidth="2" /></svg></button>
          </div>
        </div>
        <button aria-label="Add trace" className={`${BTN} ml-[18px] size-5`}>
          <svg viewBox="0 0 12 12" className="size-3"><path d="M6 1v10M1 6h10" stroke="#fff" strokeWidth="2.600" /></svg>
        </button>
      </div>
      <section className="flex min-h-0 flex-1 flex-col border-2 border-[#a6a7a9] bg-[#636366]">
        <div className="flex h-[178px] shrink-0 flex-col pl-[10px] pt-[6px] text-white">
          <TraceToolbar />
          <div className="mb-[6px] mt-[11px] flex">
            <TraceButton icon="move" label="Move" w="w-5" h="h-5" />
            <TraceButton icon="layout" label="Layout" w="w-5" h="h-5" />
          </div>
          <TraceSettings />
        </div>
        <div className="h-[3px] shrink-0 bg-[#38393b]" />
        <div className="flex min-h-0 flex-1 flex-col px-[5px] pb-[5px] pt-2">
          <div className="relative flex-1 rounded-md bg-[#4a4b4e]">
            <Chart />
            <div className="absolute -right-[7px] top-0 h-10 w-[44px] overflow-hidden whitespace-nowrap bg-[#b9b9bbc8] pl-1 pt-[5px] text-[12px] leading-4 text-[#222]">
              <p>MC_Axis</p>
              <p>SampNo</p>
            </div>
          </div>
        </div>
      </section>
      <div className="relative h-[7px] shrink-0 border-t border-[#77787b] bg-[#d0d0d3]">
        <svg viewBox="0 0 80 12" className="absolute -top-1.5 left-[355px] h-3 w-20" aria-hidden="true">
          <path d="M0 12L7 1h66l7 11z" fill="#b4b5b7" />
          <g fill="#5b5c5f"><circle cx="25" cy="6" r="2" /><circle cx="40" cy="6" r="2" /><circle cx="55" cy="6" r="2" /></g>
        </svg>
      </div>
    </main>
  );
}

/* ---------- Right toolbox ---------- */

function Toolbox() {
  return (
    <aside className={`${PANEL} w-[199px] shrink-0 px-[1px]`}>
      <h2 className={`${HEAD} h-[20px] shrink-0 pl-1 text-[12px] leading-[18px]`}>Toolbox</h2>
      <div className="flex gap-1 px-[2px] pt-[3px]">
        <Combo label="Search" value="<Clear search>" className="h-5 w-[144px] text-[12px]" dark={false} />
        <button aria-label="Find" className={`${BTN} size-5`}>
          <svg viewBox="0 0 12 12" className="size-3"><circle cx="7.500" cy="4.500" r="3.200" fill="none" stroke="#fff" strokeWidth="1.500" /><path d="M5.300 7L1 11" stroke="#fff" strokeWidth="2" /></svg>
        </button>
        <button aria-label="Clear" className={`${BTN} size-5`}>
          <svg viewBox="0 0 12 12" className="size-3"><path d="M1.500 1.500l9 9M10.500 1.500l-9 9" stroke="#fff" strokeWidth="2" /></svg>
        </button>
      </div>
      <div className="mt-[3px] flex h-[405px] justify-end">
        <div className="flex w-[15px] flex-col justify-between bg-[#323335]">
          <span className="flex h-[15px] items-center justify-center bg-[#1c1d1f] opacity-50"><Chevron d={UP} /></span>
          <span className="flex h-[15px] items-center justify-center bg-[#1c1d1f] opacity-50"><Chevron d={DOWN} /></span>
        </div>
      </div>
      <div className="mx-[1px] mt-[2px] border-t-2 border-[#a6a7a9]" />
    </aside>
  );
}

export default function App() {
  return (
    <div className="h-screen bg-white pb-[15px] font-['Open_Sans','Noto_Sans',sans-serif]">
      <div className="flex h-full flex-col rounded-t-lg rounded-b-md border border-[#161116] bg-linear-to-b from-[#b3a68f] via-[#c4c4c6] via-27% to-[#4a4b4d] to-29% p-px">
        <div className="flex min-h-0 flex-1 flex-col rounded-t-md rounded-b-sm border border-[#c9c9cb] px-1 pb-[5px]">
          <TitleBar />
          <div className="flex min-h-0 flex-1 flex-col border border-[#c2c2c4] bg-linear-to-r from-[#1b1c1e] via-[#2a2b2e] to-[#1c1d1f]">
            <MenuBar />
            <MainToolbar />
            <div className="flex min-h-0 flex-1 px-[10px]">
              <SideStrip title="Multiview Explorer" className="w-5" />
              <Explorer />
              <div className="w-1" />
              <Editor />
              <div className="w-1" />
              <Toolbox />
              <SideStrip title="Toolbox" className="ml-[1px] w-5" />
            </div>
            <footer className="mt-[9px] h-6 shrink-0 border-t border-[#a2a2a4] bg-[#1c1c1e]" />
          </div>
        </div>
      </div>
    </div>
  );
}
